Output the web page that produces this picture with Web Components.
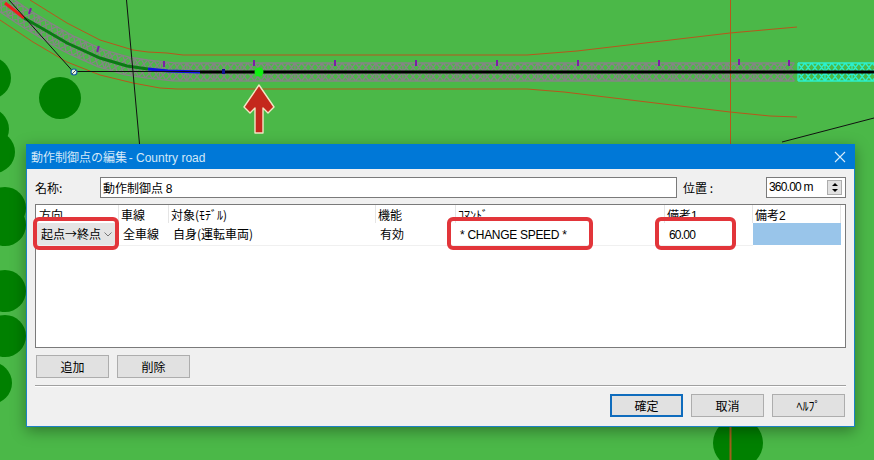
<!DOCTYPE html>
<html lang="ja">
<head>
<meta charset="utf-8">
<title>動作制御点の編集</title>
<style>
  html, body { margin: 0; padding: 0; height: 100%; overflow: hidden; background: #4bb848; }
  body { font-family: "Noto Sans CJK JP", "Liberation Sans", sans-serif; }
</style>
</head>
<body>
<track-map>
  <edit-dialog caption="動作制御点の編集" road="- Country road">
    <win-button slot="left">追加</win-button>
    <win-button slot="left">削除</win-button>
    <win-button slot="right" default>確定</win-button>
    <win-button slot="right">取消</win-button>
    <win-button slot="right">ﾍﾙﾌﾟ</win-button>
  </edit-dialog>
</track-map>

<script>
// marks along the road
const purpleMarks = [[30, 8, 20], [98, 46, 15], [164, 61, 0], [254, 60, 0], [335, 60, 0], [416, 60, 0],
  [497, 60, 0], [578, 60, 0], [659, 60, 0], [739, 59, 0], [789, 60, 0]];

const trees = [[-10, 78], [60, 98], [-12, 129], [-6, 152], [5, 208], [5, 225], [5, 291], [5, 336], [-9, 383], [738, 443]];

const roadCurve = [[-10, -6], [25, 18], [50, 33], [67, 43], [100, 58], [127, 66], [147, 69], [175, 72], [798, 72]];

// walk a polyline every `step` px, returns point + normal
function samplePath(points, step) {
  const out = [];
  let left = 0;
  for (let i = 0; i < points.length - 1; i++) {
    const [ax, ay] = points[i];
    const [bx, by] = points[i + 1];
    const len = Math.hypot(bx - ax, by - ay);
    const nx = -(by - ay) / len;
    const ny = (bx - ax) / len;
    let d = left;
    while (d <= len) {
      out.push({ x: ax + (bx - ax) * d / len, y: ay + (by - ay) * d / len, nx, ny });
      d += step;
    }
    left = d - len;
  }
  return out;
}

// truss is two rows of crosses between three rails
function trussPath(points) {
  const pts = samplePath(points, 6.75);
  const at = (p, off) => `${(p.x + p.nx * off).toFixed(1)} ${(p.y + p.ny * off).toFixed(1)}`;
  let d = '';
  for (const off of [-9, 9]) d += 'M' + pts.map(p => at(p, off)).join('L');
  pts.forEach((p, i) => {
    if (i % 4 === 0) d += `M${at(p, -9)}L${at(p, 9)}`;
    const q = pts[i + 1];
    if (!q) return;
    d += `M${at(p, -9)}L${at(q, 0)}M${at(q, -9)}L${at(p, 0)}M${at(p, 0)}L${at(q, 9)}M${at(q, 0)}L${at(p, 9)}`;
  });
  return d;
}

class TrackMap extends HTMLElement {
  constructor() {
    super();
    this.attachShadow({ mode: 'open' });
  }

  connectedCallback() {
    const treeSvg = trees.map(([x, y]) => `<circle cx="${x}" cy="${y}" r="${x === 738 ? 25 : 21}"/>`).join('');
    const marks = purpleMarks.map(([x, y, r]) =>
      `<rect x="${x - 1}" y="${y}" width="2" height="6" transform="rotate(${r} ${x} ${y + 3})"/>`).join('');
    this.shadowRoot.innerHTML = `
      <style>
        :host { display: block; position: relative; width: 874px; height: 460px; overflow: hidden; background: #4bb848; }
        svg { position: absolute; left: 0; top: 0; }
      </style>
      <svg width="874" height="460" viewBox="0 0 874 460" fill="none">
        <g fill="#008000">${treeSvg}</g>

        <path d="${trussPath(roadCurve)}" stroke="#858585" stroke-width="1.3"/>
        <path d="${trussPath([[798, 72], [880, 72]])}" stroke="#2cf0cc" stroke-width="1.3"/>

        <path d="M30 0L67 23L100 40L133 50L148 52L167 53L183 55H527L577 51L730 33L797 27" stroke="#b8561c" stroke-width="1"/>
        <path d="M0 20L33 42L67 62L100 75L133 83L160 88L177 89H527L564 92L730 112L770 116L797 117" stroke="#b8561c" stroke-width="1"/>
        <path d="M730.5 0V144" stroke="#b8561c" stroke-width="1"/>
        <path d="M730.5 420V460" stroke="#a0601c" stroke-width="2"/>

        <path d="M5 3L24 18" stroke="#ee1c1c" stroke-width="3"/>
        <path d="M24 18L50 33L67 43L100 58L127 66L148 69" stroke="#0a7a14" stroke-width="3"/>
        <path d="M148 69L168 71L200 72" stroke="#1010e0" stroke-width="3"/>
        <path d="M200 72H874" stroke="#000" stroke-width="3"/>

        <path d="M126.5 0L139.5 144" stroke="#111" stroke-width="1"/>
        <path d="M9 0L73 71.5H200" stroke="#111" stroke-width="1"/>
        <path d="M782 142L874 118" stroke="#111" stroke-width="1"/>

        <circle cx="74" cy="72" r="3" fill="#e8f4e8" stroke="#1460a0" stroke-width="1.2"/>
        <path d="M72 74L76 70" stroke="#555"/>
        <g fill="#7a1fa8">${marks}</g>
        <rect x="222" y="69" width="3" height="5" fill="#101090"/>
        <circle cx="259" cy="72" r="4.5" fill="#10f010"/>

        <path d="M259 85L274 107L268 113L263 108V133H255V108L250 113L244 107Z" fill="#c4281c" stroke="#f2e6c4" stroke-width="1.4" stroke-linejoin="round"/>
      </svg>
      <slot></slot>
    `;
  }
}

class WinButton extends HTMLElement {
  constructor() {
    super();
    this.attachShadow({ mode: 'open' }).innerHTML = `
      <style>
        :host {
          display: flex; align-items: center; justify-content: center; box-sizing: border-box;
          width: 73px; height: 23px; background: #e1e1e1; border: 1px solid #adadad;
          font-size: 12px; color: #000;
        }
        :host([default]) { border: 2px solid #0f6cbd; }
      </style>
      <slot></slot>
    `;
  }
}

const columns = [
  { head: '方向', width: 83 },
  { head: '車線', width: 50, value: '全車線' },
  { head: '対象(ﾓﾃﾞﾙ)', width: 207, value: '自身(運転車両)' },
  { head: '機能', width: 80, value: '有効' },
  { head: 'ｺﾏﾝﾄﾞ', width: 209, value: '<span class="latin">* CHANGE SPEED *</span>', mark: [-9, 146] },
  { head: '備考<span class="num">1</span>', width: 88, value: '<span class="num">60.00</span>', mark: [-10, 81] },
  { head: '備考<span class="num">2</span>', width: 88, value: '' },
];

class PointTable extends HTMLElement {
  constructor() {
    super();
    this.attachShadow({ mode: 'open' });
  }

  connectedCallback() {
    const heads = columns.map(c => `<div class="head">${c.head}</div>`).join('');
    const cells = columns.map((c, i) => {
      if (i === 0) {
        return `<div class="cell first"><div class="select"><span>起点→終点</span>
          <svg width="8" height="5" viewBox="0 0 8 5" fill="none"><path d="M.5 .5L4 4L7.5 .5" stroke="#777"/></svg></div><i class="mark" style="left:-3px;width:86px"></i></div>`;
      }
      const mark = c.mark ? `<i class="mark" style="left:${c.mark[0]}px;width:${c.mark[1]}px"></i>` : '';
      return `<div class="cell${i === 6 ? ' picked' : ''}">${c.value}${mark}</div>`;
    }).join('');
    this.shadowRoot.innerHTML = `
      <style>
        :host {
          display: block; box-sizing: border-box; height: 144px;
          background: #fff; border: 1px solid #7a7a7a;
          font-size: 12px; color: #000;
        }
        .grid { display: grid; grid-template-columns: ${columns.map(c => c.width + 'px').join(' ')}; grid-template-rows: 18px 23px; }
        .head { padding: 1px 0 0 2px; line-height: 17px; border-right: 1px solid #e5e5e5; white-space: nowrap; }
        .head:first-child { padding-left: 3px; }
        .cell { position: relative; padding-left: 4px; line-height: 22px; border-bottom: 1px solid #f0f0f0; white-space: nowrap; }
        .cell.first { padding: 0; }
        .picked { margin-bottom: 1px; background: #99c5ea; border: 0; }
        .select {
          display: flex; align-items: center; justify-content: space-between; box-sizing: border-box;
          width: 78px; height: 22px; margin-left: 1px; padding: 0 3px 0 4px;
          background: #e4e4e4;
        }
        .mark {
          position: absolute; top: -6px; height: 33px; box-sizing: border-box;
          border: 4px solid #e2353a; border-radius: 6px;
        }
        .num { font-family: "Liberation Sans", sans-serif; letter-spacing: -.8px; }
        .latin { font-family: "Liberation Sans", sans-serif; letter-spacing: -.3px; }
      </style>
      <div class="grid">${heads}${cells}</div>
    `;
  }
}

class EditDialog extends HTMLElement {
  constructor() {
    super();
    this.attachShadow({ mode: 'open' });
  }

  connectedCallback() {
    this.shadowRoot.innerHTML = `
      <style>
        :host {
          position: absolute; left: 26px; top: 144px; width: 829px; height: 283px;
          box-sizing: border-box; display: flex; flex-direction: column;
          background: #f0f0f0; border: 1px solid #1c82c4; border-top: 0;
          box-shadow: 0 4px 14px rgba(0, 0, 0, .35);
          font-size: 12px; color: #000;
        }
        .title {
          display: flex; align-items: center; justify-content: space-between; height: 25px; flex: none;
          margin: 0 -1px; padding: 0 9px 0 5px; background: #0078d7; color: #d4e8f8; font-size: 12px;
        }
        .road { font-family: "Liberation Sans", sans-serif; margin-left: -1px; }
        .body { display: flex; flex-direction: column; padding: 8px 8px 0 8px; }
        .name-row { display: flex; align-items: center; height: 21px; }
        .box { box-sizing: border-box; flex: none; height: 21px; line-height: 19px; background: #fff; border: 1px solid #7a7a7a; padding-left: 2px; white-space: nowrap; }
        .name { width: 577px; margin-left: 40px; }
        .name-label { flex: none; width: 25px; white-space: nowrap; }
        .pos-label { flex: none; margin-left: 6px; width: 83px; white-space: nowrap; }
        .spin { display: flex; justify-content: space-between; align-items: center; width: 80px; padding-right: 3px; }
        .spin-btn { display: flex; flex-direction: column; width: 15px; height: 15px; background: #e1e1e1; border: 1px solid #adadad; box-sizing: border-box; align-items: center; justify-content: space-evenly; }
        .spin-btn i { width: 0; height: 0; border-left: 3px solid transparent; border-right: 3px solid transparent; }
        .up { border-bottom: 3px solid #000; }
        .down { border-top: 3px solid #000; }
        .num { font-family: "Liberation Sans", sans-serif; letter-spacing: -.8px; }
        point-table { margin-top: 6px; }
        .actions { display: flex; gap: 8px; margin: 7px 0 0 1px; }
        hr { width: 100%; height: 1px; margin: 7px 0 0; border: 0; background: #a0a0a0; box-shadow: 0 1px 0 #fff; }
        .footer { display: flex; justify-content: flex-end; gap: 8px; margin: 8px 1px 0 0; }
      </style>
      <div class="title">
        <span>${this.getAttribute('caption')} <span class="road">${this.getAttribute('road')}</span></span>
        <svg width="12" height="12" viewBox="0 0 12 12" fill="none"><path d="M1 1L11 11M11 1L1 11" stroke="#d8ecfa" stroke-width="1.1"/></svg>
      </div>
      <div class="body">
        <div class="name-row">
          <span class="name-label">名称:</span>
          <div class="box name">動作制御点 <span class="num">8</span></div>
          <span class="pos-label">位置 :</span>
          <div class="box spin"><span class="num">360.00 m</span><div class="spin-btn"><i class="up"></i><i class="down"></i></div></div>
        </div>
        <point-table></point-table>
        <div class="actions"><slot name="left"></slot></div>
        <hr>
        <div class="footer"><slot name="right"></slot></div>
      </div>
    `;
  }
}

customElements.define('win-button', WinButton);
customElements.define('point-table', PointTable);
customElements.define('edit-dialog', EditDialog);
customElements.define('track-map', TrackMap);
</script>
</body>
</html>
